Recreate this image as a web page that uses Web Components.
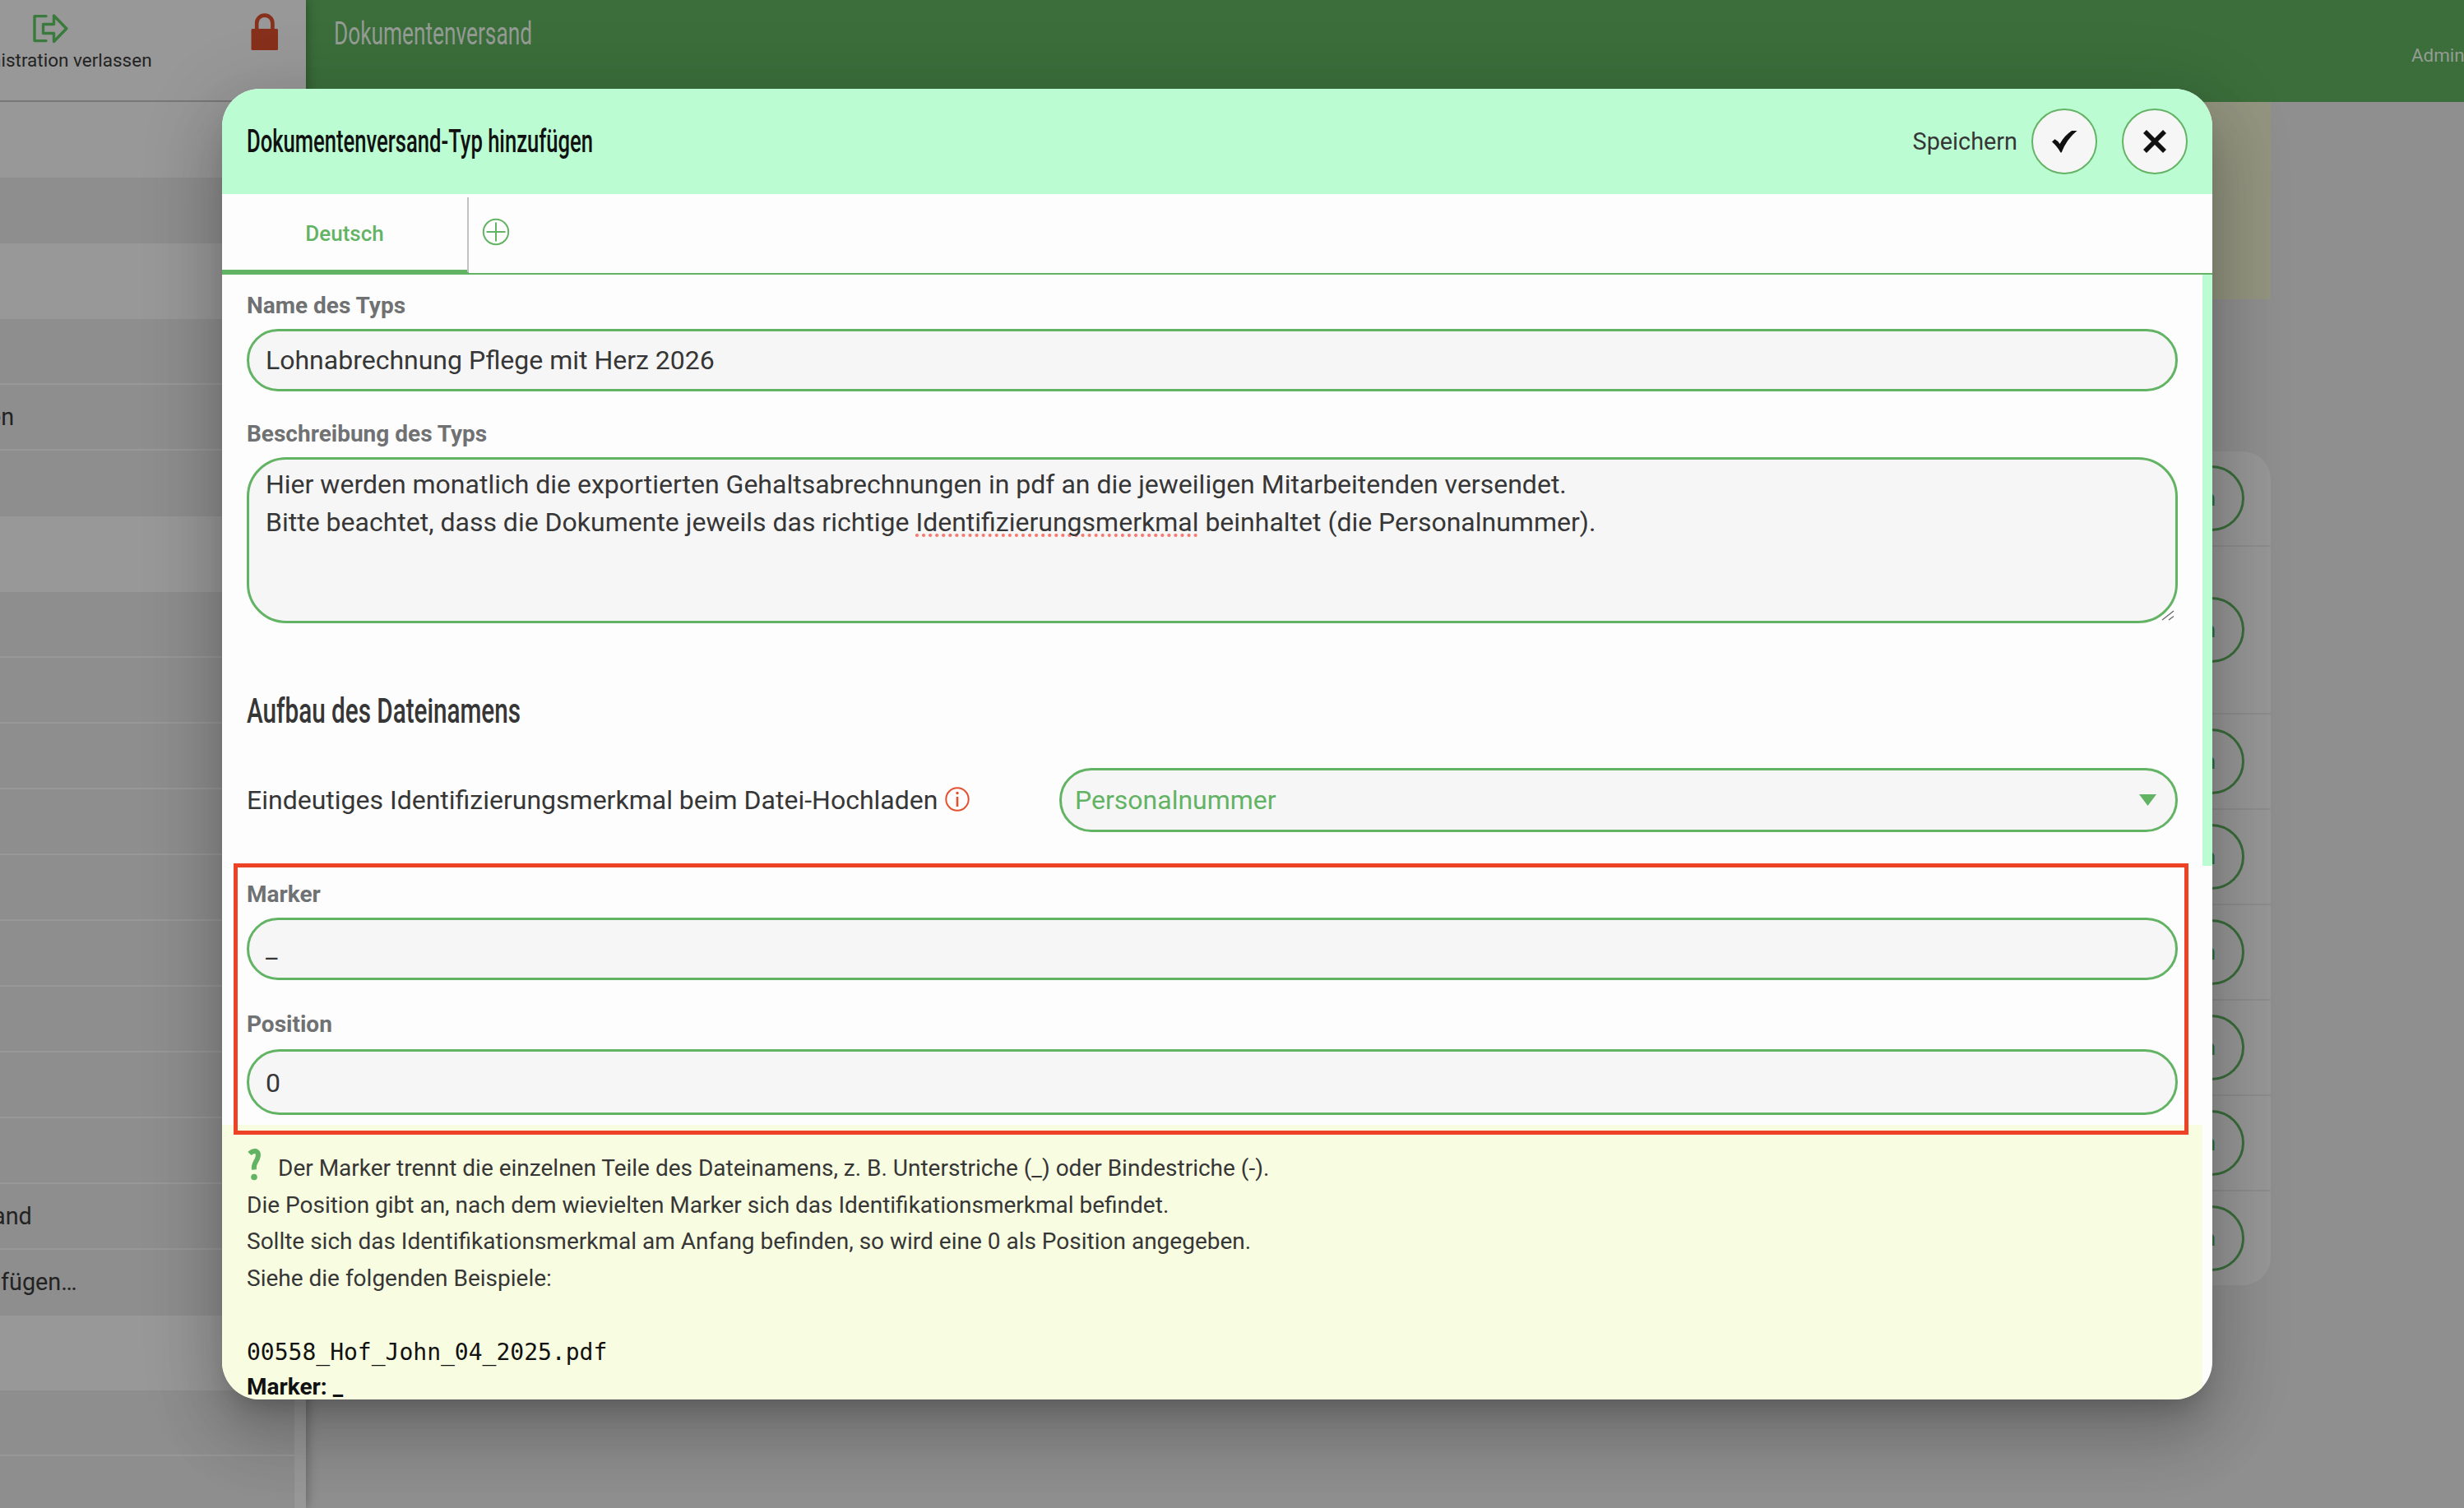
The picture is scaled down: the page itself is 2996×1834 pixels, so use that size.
<!DOCTYPE html>
<html lang="de">
<head>
<meta charset="utf-8">
<title>Dokumentenversand</title>
<style>
  html, body { margin: 0; height: 100%; overflow: hidden; }
  body {
    font-family: Roboto, "Liberation Sans", sans-serif;
    font-size: 28px;
    color: #363636;
    --green: #63b365;
    --mint: #bbfcd3;
    --field: #f6f6f6;
    --paper: #fdfdfd;
  }
</style>
</head>
<body>
<app-shell>
  <app-sidebar slot="sidebar"></app-sidebar>
  <type-table slot="content"></type-table>
  <app-dialog slot="dialog">
    <narrow-text slot="title" text="Dokumentenversand-Typ hinzufügen" width="421" size="38" weight="500" style="color:#111"></narrow-text>

    <form-field label="Name des Typs" style="--top:22px;--gap:12px">Lohnabrechnung Pflege mit Herz 2026</form-field>
    <form-field label="Beschreibung des Typs" multiline style="--top:36px;--gap:12px;--height:202px">Hier werden monatlich die exportierten Gehaltsabrechnungen in pdf an die jeweiligen Mitarbeitenden versendet.<br>Bitte beachtet, dass die Dokumente jeweils das richtige <spell-mark>Identifizierungsmerkmal</spell-mark> beinhaltet (die Personalnummer).</form-field>

    <narrow-text text="Aufbau des Dateinamens" width="333" size="43" weight="500" style="margin:83px 0 43px 30px"></narrow-text>
    <select-row value="Personalnummer">Eindeutiges Identifizierungsmerkmal beim Datei-Hochladen</select-row>

    <marked-area>
      <form-field label="Marker" style="--top:22px;--gap:12px">_</form-field>
      <form-field label="Position" style="--top:38px;--gap:14px;--height:80px">0</form-field>
    </marked-area>
    <help-box>
      <p>Der Marker trennt die einzelnen Teile des Dateinamens, z. B. Unterstriche (_) oder Bindestriche (-).</p>
      <p>Die Position gibt an, nach dem wievielten Marker sich das Identifikationsmerkmal befindet.</p>
      <p>Sollte sich das Identifikationsmerkmal am Anfang befinden, so wird eine 0 als Position angegeben.</p>
      <p>Siehe die folgenden Beispiele:</p>
      <code slot="example">00558_Hof_John_04_2025.pdf</code>
      <b slot="example">Marker: _</b>
    </help-box>
  </app-dialog>
</app-shell>

<script>
(function () {
  // registers an element whose shadow root is filled by render(host)
  function define(name, render) {
    customElements.define(name, class extends HTMLElement {
      constructor() {
        super();
        this.attachShadow({ mode: "open" });
      }
      connectedCallback() {
        this.shadowRoot.innerHTML = render(this);
      }
    });
  }

  define("app-shell", () => `
    <style>
      :host { display: grid; grid-template-columns: 372px 1fr; height: 100vh; overflow: hidden; background: #8f8f8f; position: relative; }
      .side { position: relative; z-index: 1; box-shadow: 0 0 14px rgba(0,0,0,.35); overflow: hidden; background: #989898; }
      .main { overflow: hidden; min-width: 0; }
      header { height: 124px; box-sizing: border-box; background: #3b6e3b; display: flex; justify-content: space-between; padding: 16px 0 0 34px; color: #949c94; }
      .user { font-size: 22.400px; line-height: 30px; width: 64px; padding-top: 36px; white-space: nowrap; }
      ::slotted([slot=dialog]) { position: absolute; z-index: 2; left: 270px; top: 108px; width: 2420px; height: 1594px; }
    </style>
    <div class="side"><slot name="sidebar"></slot></div>
    <div class="main">
      <header>
        <narrow-text text="Dokumentenversand" width="241" size="38" weight="400"></narrow-text>
        <span class="user">Admin</span>
      </header>
      <slot name="content"></slot>
    </div>
    <slot name="dialog"></slot>
  `);

  // condensed headline, squeezed to a set width
  define("narrow-text", (el) => {
    const w = el.getAttribute("width");
    return `
      <style>
        :host { display: block; height: 50px; }
        svg { display: block; overflow: visible; }
        text { font-size: ${el.getAttribute("size")}px; font-weight: ${el.getAttribute("weight")}; fill: currentColor; }
      </style>
      <svg width="${w}" height="50"><text x="0" y="37.500" textLength="${w}" lengthAdjust="spacingAndGlyphs">${el.getAttribute("text")}</text></svg>
    `;
  });

  define("app-sidebar", () => {
    const groups = [
      { rows: [""], gap: 92 },
      { rows: ["", "en", ""], gap: 92 },
      { rows: ["", "", "", "", "", "", "", "", "", "and", "fügen…"], gap: 92 },
      { rows: ["", "", ""], gap: 91 }
    ];
    const shift = { "en": -14, "and": -9, "fügen…": 1 };
    return `
      <style>
        :host { display: block; color: #232323; font-size: 28.800px; }
        .top { height: 124px; box-sizing: border-box; border-bottom: 2px solid #777; display: flex; justify-content: space-between; }
        .leave { width: 247px; margin-left: -63px; padding-top: 16px; display: flex; flex-direction: column; align-items: center; font-size: 22.500px; line-height: 28px; white-space: nowrap; flex: none; }
        .leave svg { margin-bottom: 6px; }
        .lock { margin: 16px 33px 0 0; }
        .group { margin-right: 14px; background: #8e8e8e; }
        .row { height: 80px; box-sizing: border-box; display: flex; align-items: center; white-space: nowrap; border-bottom: 2px solid #989898; }
        .row:last-child { border-color: transparent; }
      </style>
      <div class="top">
        <div class="leave">
          <svg width="44" height="37" viewBox="0 0 44 37" fill="none" stroke="#3b7a3d" stroke-width="3.4" stroke-linejoin="round" stroke-linecap="round">
            <path d="M17 3.6H3v30h14M13.500 13.500v11H26.500v10L41.800 18.800L26.500 3v10.500z"/>
          </svg>
          Administration verlassen
        </div>
        <svg class="lock" width="34" height="46" viewBox="0 0 34 46">
          <path d="M7.200 22V12.200a9.600 9.600 0 0 1 19.200 0V22" fill="none" stroke="#87301c" stroke-width="4.600"/>
          <rect x=".5" y="19" width="32.500" height="26" rx="1.500" fill="#87301c"/>
        </svg>
      </div>
      ${groups.map((g) => `
        <div class="group" style="margin-top:${g.gap}px">
          ${g.rows.map((r) => `<div class="row"><span style="margin-left:${shift[r] || 0}px">${r}</span></div>`).join("")}
        </div>`).join("")}
    `;
  });

  define("type-table", () => {
    const heights = [116, 204, 116, 116, 116, 116, 116, 114];
    return `
      <style>
        :host { display: block; width: 2389px; }
        .hint { height: 240px; background: #939580; }
        .card { margin-top: 185px; background: #979797; border-radius: 34px; overflow: hidden; }
        .row { box-sizing: border-box; display: flex; align-items: center; justify-content: flex-end; padding-right: 32px; border-bottom: 2px solid #8d8d8d; }
        .row:last-child { border: 0; }
        .btn { width: 220px; height: 80px; box-sizing: border-box; border: 3px solid #3a6d3b; border-radius: 40px; display: flex; align-items: center; justify-content: flex-end; padding-right: 32px; color: #3a6d3b; font-size: 26px; font-weight: 500; }
      </style>
      <div class="hint"></div>
      <div class="card">
        ${heights.map((h) => `<div class="row" style="height:${h}px"><span class="btn">n</span></div>`).join("")}
      </div>
    `;
  });

  define("app-dialog", () => `
    <style>
      :host {
        display: flex; flex-direction: column; overflow: hidden;
        background: var(--paper); border-radius: 46px;
        box-shadow: 0 22px 30px -14px rgba(0,0,0,.2), 0 48px 76px 6px rgba(0,0,0,.14), 0 18px 92px 16px rgba(0,0,0,.12);
      }
      header { flex: none; height: 128px; box-sizing: border-box; padding: 0 30px; display: flex; align-items: center; background: var(--mint); }
      header ::slotted(*) { margin-right: auto; }
      .save { margin-right: 17px; font-size: 28.800px; }
      .round { width: 80px; height: 80px; box-sizing: border-box; border: 2px solid var(--green); border-radius: 50%; background: var(--field); display: grid; place-items: center; }
      .round + .round { margin-left: 30px; }
      .tabs { flex: none; height: 98px; box-sizing: border-box; display: flex; border-bottom: 2px solid var(--green); }
      .tab { width: 300px; box-sizing: border-box; height: 98px; border-bottom: 6px solid var(--green); display: grid; place-items: center; padding: 4px 2px 0 0; color: var(--green); font-size: 26px; font-weight: 500; }
      .split { width: 2px; height: 91px; margin: 4px 16px 0 -2px; background: #c2c2c2; }
      .add { margin-top: 29px; }
      .body { flex: 1; min-height: 0; display: flex; }
      .content { flex: 1; min-width: 0; overflow: hidden; }
      .track { width: 12px; }
      .thumb { height: 719px; background: var(--mint); }
    </style>
    <header>
      <slot name="title"></slot>
      <span class="save">Speichern</span>
      <span class="round">
        <svg width="32" height="28" viewBox="0 0 32 28"><path d="M1 14.500L4.500 11.200Q8 13 10.500 17Q16 7 25 1H31.500Q19 11 12.600 27.500H11.500Q7 19.500 1 14.500z" fill="#111"/></svg>
      </span>
      <span class="round">
        <svg width="30" height="30" viewBox="0 0 30 30"><path d="M3 3L27 27M27 3L3 27" stroke="#111" stroke-width="5.600"/></svg>
      </span>
    </header>
    <div class="tabs">
      <div class="tab">Deutsch</div>
      <div class="split"></div>
      <svg class="add" width="34" height="34" viewBox="0 0 34 34" fill="none" stroke="#63b365" stroke-width="2">
        <circle cx="17" cy="17" r="15.200"/><path d="M17 5.500v23M5.500 17h23"/>
      </svg>
    </div>
    <div class="body">
      <div class="content"><slot></slot></div>
      <div class="track"><div class="thumb"></div></div>
    </div>
  `);

  define("form-field", (el) => {
    const multi = el.hasAttribute("multiline");
    return `
      <style>
        :host { display: block; padding: var(--top) 30px 0; }
        label { display: block; margin-bottom: var(--gap); line-height: 32px; font-weight: 700; font-size: 28px; color: #707173; }
        .box { position: relative; height: var(--height, 76px); box-sizing: border-box; border: 3px solid var(--green); border-radius: 48px; background: var(--field); padding: 0 20px; font-size: 32px; line-height: 71px; white-space: nowrap; }
        .box.multi { padding-top: 7px; line-height: 46px; }
        :host([label=Position]) .box { line-height: 76px; }
        .grip { position: absolute; right: 1px; bottom: 0; }
      </style>
      <label>${el.getAttribute("label")}</label>
      <div class="box ${multi ? "multi" : ""}"><slot></slot>
        ${multi ? `<svg class="grip" width="16" height="14" viewBox="0 0 16 14" stroke="#666" stroke-width="1.300"><path d="M1 13L15 2M9 13L15 8.500"/></svg>` : ""}
      </div>
    `;
  });

  define("spell-mark", () => `
    <style>
      :host { display: inline-block; line-height: 46px; background: radial-gradient(circle at 2px 2px, #f57d73 1.800px, transparent 2.300px) 0 37px / 8.070px 4px repeat-x; }
    </style>
    <slot></slot>
  `);

  define("select-row", (el) => `
    <style>
      :host { display: flex; align-items: center; padding: 0 30px; font-size: 32px; }
      .name { flex: 1; display: flex; align-items: center; white-space: nowrap; }
      .name svg { margin: -2px 0 0 9px; }
      .select { width: 1360px; height: 78px; box-sizing: border-box; border: 3px solid var(--green); border-radius: 39px; background: var(--field); color: var(--green); display: flex; align-items: center; justify-content: space-between; padding: 0 23px 0 16px; }
    </style>
    <div class="name"><slot></slot>
      <svg width="30" height="30" viewBox="0 0 30 30" fill="none" stroke="#e4512e" stroke-width="2"><circle cx="15" cy="15" r="13.700"/><path d="M15 12v12" stroke-width="2.600"/><circle cx="15" cy="7.500" r="1.700" fill="#e4512e" stroke="none"/></svg>
    </div>
    <div class="select"><span>${el.getAttribute("value")}</span>
      <svg width="21" height="14" viewBox="0 0 21 14" fill="#63b365"><path d="M0 0h21L10.500 14z"/></svg>
    </div>
  `);

  define("marked-area", () => `
    <style>
      :host { display: block; position: relative; height: 318px; margin-top: 38px; }
      .frame { position: absolute; left: 14px; right: 17px; top: 0; height: 330px; box-sizing: border-box; border: 5px solid #ed4226; z-index: 1; }
    </style>
    <slot></slot>
    <div class="frame"></div>
  `);

  define("help-box", () => `
    <style>
      :host { display: block; height: 334px; box-sizing: border-box; padding: 31px 30px 0; background: #f8fce0; font-size: 28px; line-height: 44.600px; white-space: nowrap; }
      svg { float: left; margin: -3px 20px 0 0; }
      ::slotted(p) { margin: 0; }
      .example { display: flex; flex-direction: column; margin-top: 45.600px; color: #111; }
      ::slotted(code) { font-family: "DejaVu Sans Mono", monospace; font-size: 28px; line-height: 44.600px; }
      ::slotted(b) { line-height: 38px; font-size: 28px; }
    </style>
    <svg width="18" height="40" viewBox="0 0 18 40" fill="none" stroke="#63b365">
      <path d="M3.500 7Q7 3.500 11 4Q15.500 6 13 13L10 19Q8.500 22 9 26.500" stroke-width="6"/><circle cx="9" cy="35.500" r="3.800" fill="#63b365" stroke="none"/>
    </svg>
    <slot></slot>
    <div class="example"><slot name="example"></slot></div>
  `);
})();
</script>
</body>
</html>
